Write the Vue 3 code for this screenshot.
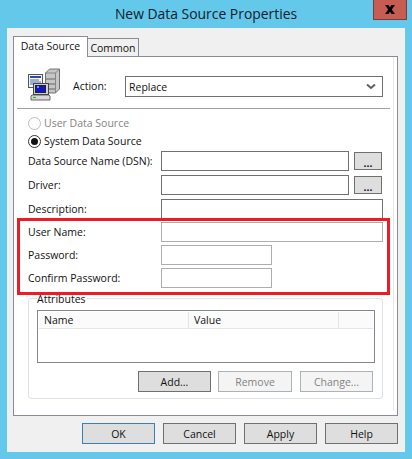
<script setup>
const fields = [
  { label: 'Data Source Name (DSN):', size: 'mid', browse: true, gap: 'g1' },
  { label: 'Driver:', size: 'mid', browse: true, gap: 'g4' },
  { label: 'Description:', size: 'full', gap: 'g4' },
  { label: 'User Name:', size: 'full soft', gap: 'g3' },
  { label: 'Password:', size: 'short soft', gap: 'g3' },
  { label: 'Confirm Password:', size: 'short soft', gap: 'g3' }
]
</script>

<template>
  <div class="window">
    <header class="titlebar">
      <span></span>
      <h1 class="title">New Data Source Properties</h1>
      <div class="close">
        <svg width="10" height="9" viewBox="0 0 10 9"><path d="M0 0h3.4L5 2.2 6.6 0H10L6.8 4.5 10 9H6.6L5 6.8 3.4 9H0l3.2-4.5z" fill="#000"/></svg>
      </div>
    </header>
    <main class="client">
      <div class="tabs">
        <div class="tab active">Data Source</div>
        <div class="tab">Common</div>
      </div>
      <section class="panel">
        <div class="inner">
          <div class="action">
            <svg class="icon" width="33" height="33" viewBox="0 0 33 33">
              <path d="M18.5 5l4-4h10v20l-4 4h-10z" fill="#c6c6c6" stroke="#555" stroke-width=".8"/>
              <path d="M18.5 5h10v20M28.500 5l4-4" fill="none" stroke="#777" stroke-width=".8"/>
              <path d="M19 11h9M19 16h9M19 21h9" stroke="#666" stroke-width="1"/>
              <rect x="1.5" y="6.500" width="14" height="13" fill="#f4f4f4" stroke="#555"/>
              <path d="M3 8h11v2H3z" fill="#2a4f9e"/>
              <path d="M3 12h9M3 14h11M3 16h8" stroke="#4a6bb0" stroke-width="1"/>
              <rect x="6.500" y="15.500" width="15" height="11" fill="#d0d0d0" stroke="#444"/>
              <rect x="8.500" y="17.500" width="10" height="7" fill="#1414c8" stroke="#222"/>
              <path d="M10 19h2" stroke="#fff"/>
              <path d="M5 27h17l1 1v4H4v-4z" fill="#d8d8d8" stroke="#444" stroke-width=".8"/>
              <path d="M6 29.500h3" stroke="#1cc41c" stroke-width="1.2"/>
            </svg>
            <label class="action-label">Action:</label>
            <div class="select">
              <span>Replace</span>
              <svg width="10" height="6" viewBox="0 0 10 6"><path d="M1 .5l4 3.500 4-3.500" fill="none" stroke="#606060" stroke-width="2"/></svg>
            </div>
          </div>
          <div class="divider"></div>
          <div class="radios">
            <div class="radio-row disabled"><span class="radio"></span>User Data Source</div>
            <div class="radio-row"><span class="radio on"></span>System Data Source</div>
          </div>
          <div class="fields">
            <div v-for="f in fields" :key="f.label" class="field" :class="f.gap">
              <span class="field-label">{{ f.label }}</span>
              <div class="input" :class="f.size"></div>
              <button v-if="f.browse" class="btn browse" type="button">...</button>
            </div>
          </div>
          <div class="group">
            <span class="legend">Attributes</span>
            <div class="list">
              <div class="list-head">
                <span class="col name">Name</span>
                <span class="col value">Value</span>
                <span class="col rest"></span>
              </div>
            </div>
            <div class="group-buttons">
              <button class="btn wide" type="button">Add...</button>
              <button class="btn wide off w74" type="button">Remove</button>
              <button class="btn wide off" type="button">Change...</button>
            </div>
          </div>
        </div>
      </section>
      <footer class="footer">
        <button class="btn wide primary" type="button">OK</button>
        <button class="btn wide" type="button">Cancel</button>
        <button class="btn wide" type="button">Apply</button>
        <button class="btn wide" type="button">Help</button>
      </footer>
    </main>
    <div class="highlight"></div>
  </div>
</template>

<style>
html, body { margin: 0; background: #63c8ea; }
</style>

<style scoped>
.window {
  position: relative;
  width: 412px;
  height: 459px;
  overflow: hidden;
  background: #63c8ea;
  font-family: "Open Sans", "Noto Sans", sans-serif;
  font-size: 10.5px;
  color: #111;
  display: flex;
  flex-direction: column;
}
.titlebar {
  height: 28px;
  flex: none;
  display: grid;
  grid-template-columns: 1fr auto 1fr;
}
.title {
  margin: 0;
  font-size: 13.9px;
  font-weight: 400;
  line-height: 27px;
  color: #10202a;
}
.close {
  justify-self: end;
  width: 32px;
  height: 19px;
  margin-right: 5px;
  background: #c75c52;
  border: 1px solid #7d3b38;
  border-top: 0;
  box-sizing: content-box;
  display: flex;
  align-items: center;
  justify-content: center;
}
.client {
  flex: none;
  height: 424px;
  margin: 0 7px;
  padding: 8px 7px 0 6px;
  box-sizing: border-box;
  background: #f0f0f0;
}
.tabs {
  display: flex;
  align-items: flex-end;
  height: 20px;
  position: relative;
  z-index: 1;
}
.tab {
  width: 51px;
  height: 18px;
  box-sizing: border-box;
  border: 1px solid #898c95;
  border-left: 0;
  border-bottom: 0;
  text-align: center;
  line-height: 18px;
}
.tab.active {
  width: 75px;
  height: 21px;
  margin-bottom: -1px;
  background: #fff;
  border-left: 1px solid #898c95;
  line-height: 18px;
}
.panel {
  height: 360px;
  box-sizing: border-box;
  background: #fff;
  border: 1px solid #898c95;
  padding-right: 3px;
  padding-bottom: 4px;
}
.inner {
  height: 100%;
  box-sizing: border-box;
  border-right: 1px solid #e8e8e8;
}
.action {
  display: flex;
  align-items: flex-start;
  height: 32px;
  padding: 11px 0 0 13px;
}
.icon { flex: none; }
.action-label {
  margin: 10px 0 0 13px;
  width: 52px;
  line-height: 16px;
}
.select {
  width: 258px;
  height: 21px;
  margin-top: 8px;
  box-sizing: border-box;
  border: 1px solid #707070;
  display: flex;
  align-items: center;
  justify-content: space-between;
  padding: 0 6px 0 3px;
}
.divider {
  height: 1px;
  margin: 8px 3px 0 3px;
  background: #a0a0a0;
}
.radios { margin: 5px 0 0 14px; }
.radio-row {
  display: flex;
  align-items: center;
  height: 18px;
  gap: 3px;
}
.radio-row.disabled { color: #838383; }
.radio {
  width: 13px;
  height: 13px;
  box-sizing: border-box;
  border: 1px solid #333;
  border-radius: 50%;
  background: #fff;
  display: flex;
  align-items: center;
  justify-content: center;
}
.disabled .radio { border-color: #bcbcbc; }
.radio.on::after {
  content: "";
  width: 7px;
  height: 7px;
  border-radius: 50%;
  background: #111;
}
.fields { margin: 1px 0 0 14px; }
.field {
  display: flex;
  align-items: center;
  height: 20px;
}
.g3 { margin-top: 3px; }
.g4 { margin-top: 4px; }
.g1 { margin-top: 0; }
.field-label { width: 133px; flex: none; }
.input {
  height: 20px;
  box-sizing: border-box;
  border: 1px solid #707070;
  background: #fff;
}
.input.mid { width: 188px; }
.input.full { width: 222px; }
.input.short { width: 111px; }
.input.soft { border-color: #abadb3; }
.btn {
  font: inherit;
  color: #111;
  padding: 0;
  margin: 0;
  box-sizing: border-box;
  background: #dedede;
  border: 1px solid #707070;
  height: 21px;
  outline: none;
}
.browse {
  width: 28px;
  height: 18px;
  margin-left: 5px;
  padding-top: 3px;
  line-height: 14px;
  font-weight: 700;
}
.group {
  position: relative;
  width: 355px;
  height: 101px;
  box-sizing: border-box;
  margin: 10px 0 0 14px;
  padding: 11px 0 0 8px;
  border: 1px solid #dce2e6;
  border-radius: 3px;
}
.legend {
  position: absolute;
  left: 8px;
  top: -8px;
  padding: 0 1px 0 0;
  background: #fff;
  line-height: 16px;
}
.list {
  width: 338px;
  height: 53px;
  box-sizing: border-box;
  border: 1px solid #828790;
  padding: 1px;
}
.list-head {
  display: flex;
  height: 16px;
  border-bottom: 1px solid #e5e5e5;
  background: #fbfbfb;
}
.col {
  line-height: 17px;
  padding-left: 5px;
  box-sizing: border-box;
  border-right: 1px solid #e5e5e5;
}
.name { width: 150px; }
.value { width: 150px; }
.rest { flex: 1; border-right: 0; }
.group-buttons {
  display: flex;
  justify-content: flex-end;
  gap: 7px;
  margin: 8px 9px 0 0;
}
.wide { width: 73px; }
.w74 { width: 74px; margin-right: 1px; }
.off {
  background: #f4f4f4;
  border-color: #adb2b5;
  color: #838383;
}
.primary { border-color: #3c7fb1; }
.footer {
  display: flex;
  justify-content: flex-end;
  gap: 8px;
  margin-top: 7px;
}
.highlight {
  position: absolute;
  left: 17px;
  top: 218px;
  width: 373px;
  height: 77px;
  box-sizing: border-box;
  border: 3px solid #ed1c24;
  pointer-events: none;
}
</style>
